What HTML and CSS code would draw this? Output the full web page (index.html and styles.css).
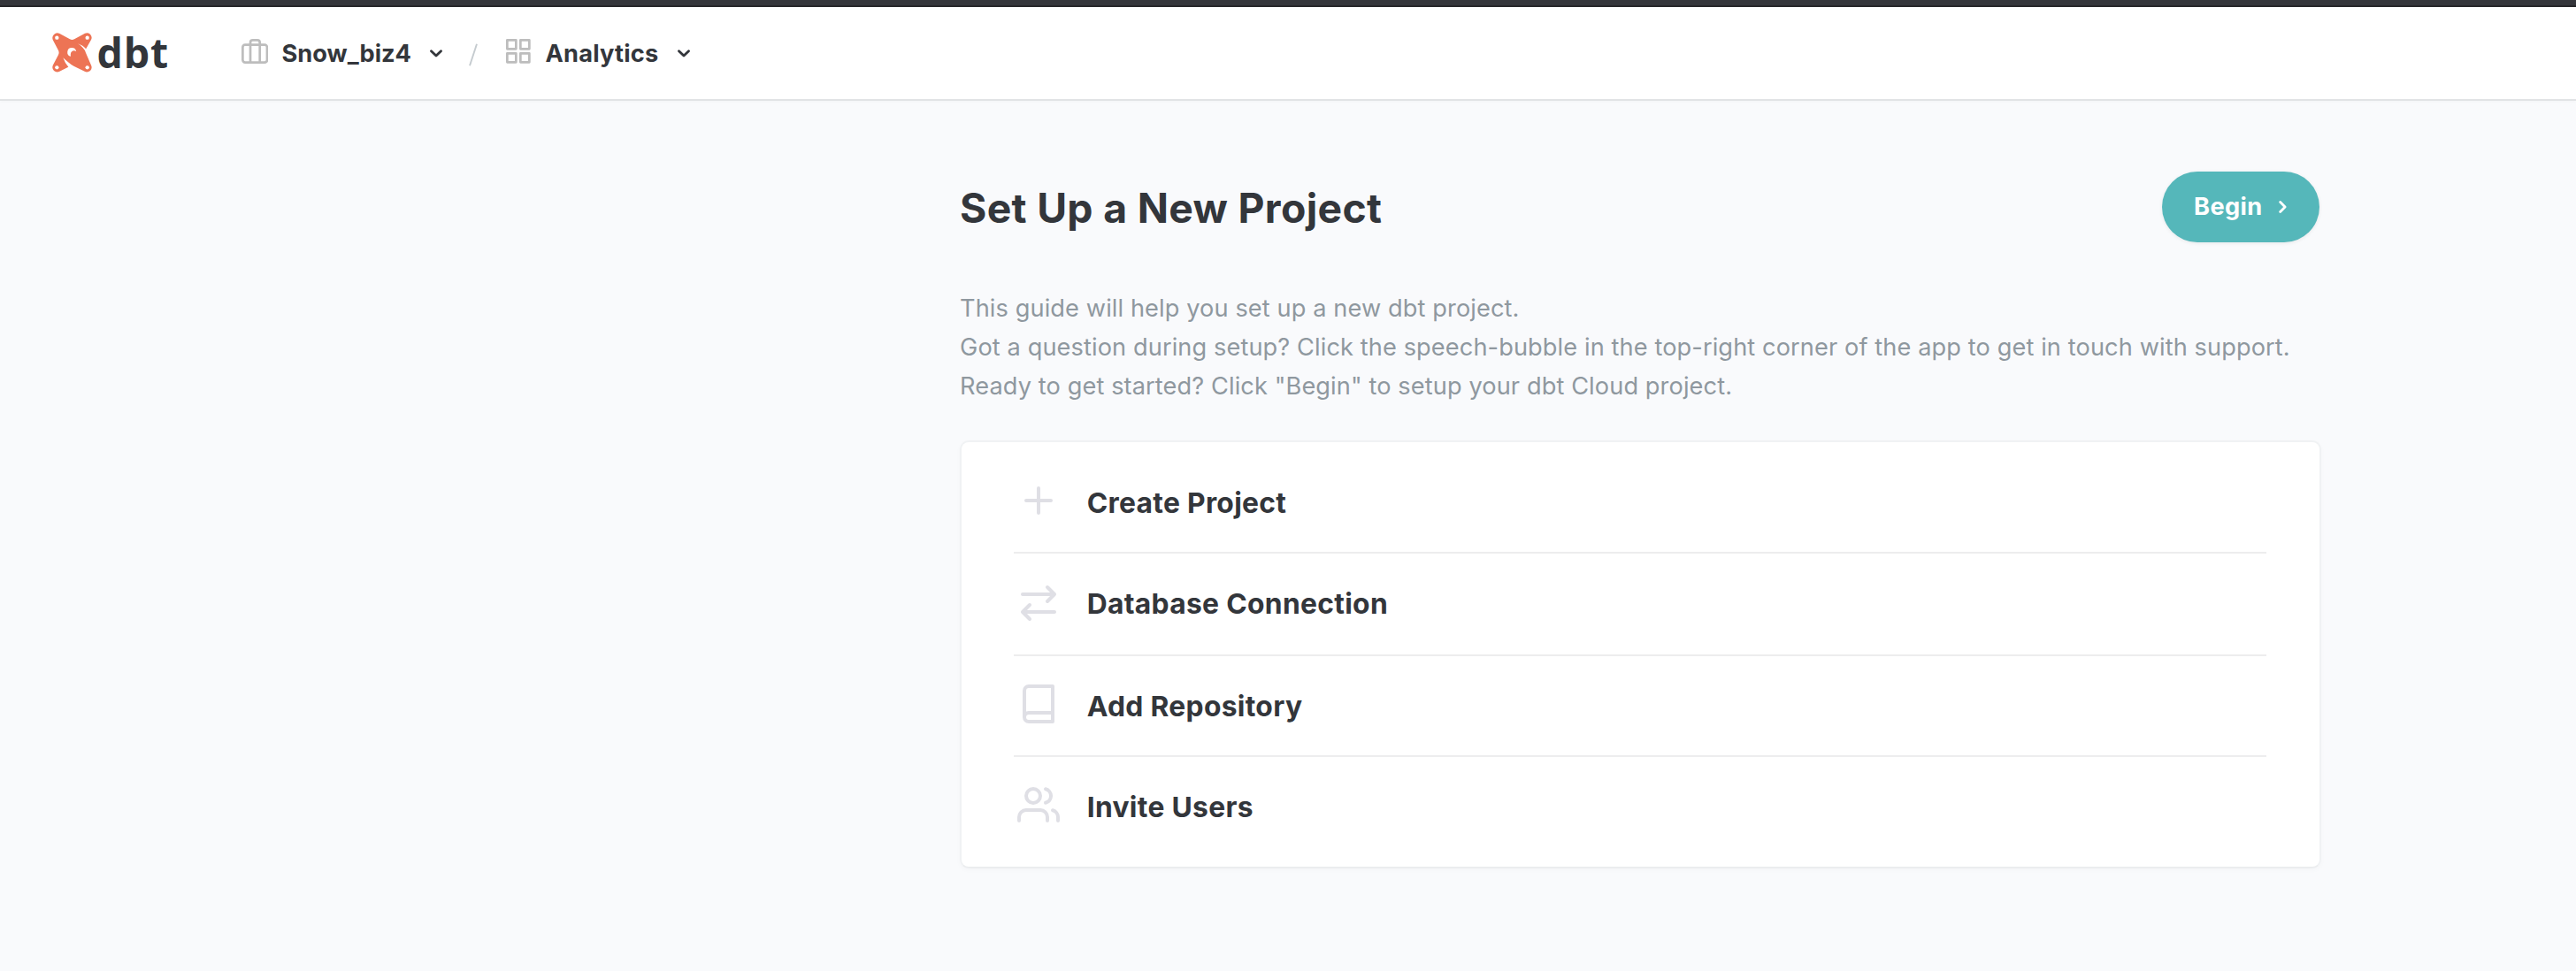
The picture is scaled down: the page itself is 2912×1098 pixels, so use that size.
FILE: index.html
```
<!DOCTYPE html>
<html lang="en">
<head>
<meta charset="utf-8">
<title>Set Up a New Project</title>
<link rel="stylesheet" href="styles.css">
</head>
<body>
<div class="top-strip"></div>
<header class="header">
  <a class="logo">
    <svg class="logo-mark" viewBox="20 20 135 134">
      <path fill="#ed7455" d="M44 22.500L80 42Q87.500 46 95 42L131 22.500Q140 18 149 25Q157 34 152 44L134.500 75Q125 63 107 57Q118 63 124 71Q131 78 134 88L152 130Q157 141 149 149Q140 156 130 151.500L93 133Q84 128 77 122Q65 113 57 105Q63 123 75 136L45 151.500Q34 156 26 149Q18 141 22.500 130L41 95Q44.500 87.500 41 80L22.500 45Q18 34 26 26Q34 18 44 22.500Z"/>
      <g fill="#fff">
        <circle cx="36" cy="37" r="6.500"/><circle cx="139" cy="37" r="6.500"/>
        <circle cx="36" cy="138" r="6.500"/><circle cx="139" cy="138" r="6.500"/>
        <path d="M83 100.500A15 15 0 1 1 101.500 84Q96 79.500 90 81.500Q80 86 83 100.500Z"/>
      </g>
    </svg>
    <span class="logo-text">dbt</span>
  </a>
  <div class="crumb">
    <svg class="icon-case" viewBox="0 0 30.500 28" fill="none" stroke="#bdbdbd" stroke-width="2.700">
      <rect x="1.350" y="6.700" width="27.600" height="19.900" rx="2.800"/>
      <path d="M10 26.500V4.200Q10 1.400 12.800 1.400H17.900Q20.700 1.400 20.700 4.200V26.500"/>
    </svg>
    <span class="crumb-name crumb-account">Snow_biz4</span>
    <svg class="chevron-down" viewBox="0 0 14 9"><path d="M1.500 1.700L7 7L12.500 1.700"/></svg>
  </div>
  <svg class="slash" viewBox="0 0 10 26"><path d="M9 .7L1 25.200"/></svg>
  <div class="crumb">
    <svg class="icon-grid" viewBox="0 0 28 28" fill="none" stroke="#bdbdbd" stroke-width="2.700" stroke-linejoin="round">
      <rect x="1.350" y="1.350" width="10" height="10"/><rect x="16.350" y="1.350" width="10" height="10"/>
      <rect x="1.350" y="16.350" width="10" height="10"/><rect x="16.350" y="16.350" width="10" height="10"/>
    </svg>
    <span class="crumb-name crumb-project">Analytics</span>
    <svg class="chevron-down" viewBox="0 0 14 9"><path d="M1.500 1.700L7 7L12.500 1.700"/></svg>
  </div>
</header>
<main class="content">
  <div class="title-row">
    <h1 class="title">Set Up a New Project</h1>
    <button class="begin">Begin
      <svg class="chevron-right" viewBox="0 0 9 14"><path d="M1.700 1.600L7.100 7L1.700 12.400"/></svg>
    </button>
  </div>
  <p class="intro">This guide will help you set up a new dbt project.<br>Got a question during setup? Click the speech-bubble in the top-right corner of the app to get in touch with support.<br>Ready to get started? Click "Begin" to setup your dbt Cloud project.</p>
  <ul class="steps">
    <li class="step">
      <svg class="step-icon" viewBox="0 0 24 24"><path d="M12 5v14M5 12h14"/></svg>
      <span class="step-name">Create Project</span>
    </li>
    <li class="step">
      <svg class="step-icon step-icon-arrows" viewBox="0 0 24 24"><path d="M17 3l4 4-4 4M3 7h18M7 21l-4-4 4-4M21 17H3"/></svg>
      <span class="step-name step-name-raised">Database Connection</span>
    </li>
    <li class="step">
      <svg class="step-icon" viewBox="0 0 24 24"><path d="M4 19.500A2.500 2.500 0 0 1 6.500 17H20M6.500 2H20v20H6.500A2.500 2.500 0 0 1 4 19.500v-15A2.500 2.500 0 0 1 6.500 2z"/></svg>
      <span class="step-name">Add Repository</span>
    </li>
    <li class="step">
      <svg class="step-icon step-icon-users" viewBox="0 0 24 24"><path d="M17 21v-2a4 4 0 0 0-4-4H5a4 4 0 0 0-4 4v2M23 21v-2a4 4 0 0 0-3-3.870M16 3.130a4 4 0 0 1 0 7.750"/><circle cx="9" cy="7" r="4"/></svg>
      <span class="step-name step-name-raised">Invite Users</span>
    </li>
  </ul>
</main>
</body>
</html>
```
FILE: styles.css
```
* { box-sizing: border-box; }
body {
  margin: 0;
  min-height: 1098px;
  background: #f9fafc;
  color: #33363b;
  font-family: Inter, "Liberation Sans", sans-serif;
}
svg { display: block; flex: none; }
.top-strip { height: 8px; background: #35363b; border-bottom: 2px solid #28282b; }
.header {
  display: flex;
  align-items: center;
  height: 106px;
  padding-left: 58.5px;
  background: #fff;
  border-bottom: 2px solid #e1e3e5;
  box-shadow: 0 1px 4px rgba(0, 0, 0, .03);
}
.logo { display: flex; align-items: center; width: 214px; }
.logo-mark { width: 45px; height: 44.7px; margin-top: -1px; }
.logo-text {
  margin: -3px 0 0 6px;
  font: 700 46.5px/60px "Open Sans", sans-serif;
  letter-spacing: .8px;
}
.crumb { display: flex; align-items: center; }
.icon-case { width: 30.5px; height: 28px; margin-top: -4px; }
.icon-grid { width: 28px; height: 28px; margin-top: -4px; }
.crumb-name { margin-top: 1px; font-size: 27.2px; font-weight: 700; line-height: 40px; }
.crumb-account { width: 167.5px; margin-left: 15.5px; letter-spacing: 0; }
.crumb-project { width: 149px; margin-left: 16.5px; letter-spacing: .22px; }
.chevron-down { width: 14px; height: 9px; }
.chevron-down path, .chevron-right path {
  fill: none;
  stroke: #33363b;
  stroke-width: 2.8;
  stroke-linecap: round;
  stroke-linejoin: round;
}
.slash { width: 10px; height: 26px; margin: 3px 32.5px 0 29.5px; }
.slash path { fill: none; stroke: #c5cbcf; stroke-width: 1.9; }
.content { width: 1539px; margin: 80px 0 0 1085px; }
.title-row { display: flex; align-items: center; justify-content: space-between; height: 80px; }
.title { margin: 2px 0 0; font-size: 46.3px; font-weight: 700; line-height: 60px; letter-spacing: .33px; }
.begin {
  display: flex;
  align-items: center;
  justify-content: space-between;
  width: 178px;
  height: 80px;
  margin-right: 2px;
  padding: 0 37.5px 0 36px;
  border: 0;
  border-radius: 40px;
  background: #55b7ba;
  box-shadow: 0 1px 4px rgba(0, 0, 0, .08);
  color: #fff;
  font: 700 27.2px/40px Inter, sans-serif;
  letter-spacing: .4px;
}
.chevron-right { width: 9px; height: 14px; }
.chevron-right path { stroke: #fff; }
.intro {
  margin: 53px 0 39px;
  color: #8f989f;
  font-size: 27.2px;
  line-height: 44px;
  letter-spacing: .1px;
  white-space: nowrap;
}
.steps {
  margin: 0;
  padding: 12px 60px 10px 59px;
  list-style: none;
  background: #fff;
  border: 2px solid #f0f2f4;
  border-bottom-color: #ebedef;
  border-radius: 10px;
  box-shadow: 0 2px 6px rgba(0, 0, 0, .025);
}
.step {
  display: flex;
  align-items: center;
  height: 114px;
  padding-left: 4px;
  border-bottom: 2px solid #ededee;
}
.step:nth-child(2) { height: 116px; }
.step:last-child { border-bottom: 0; }
.step-icon {
  width: 48px;
  height: 48px;
  margin-top: -4px;
  fill: none;
  stroke: #dfdfe5;
  stroke-width: 2;
  stroke-linecap: round;
  stroke-linejoin: round;
}
.step-icon-arrows { margin-top: -2px; }
.step-icon-users { margin-top: -6px; }
.step-name { margin: 1px 0 0 30.7px; font-size: 31.8px; font-weight: 700; line-height: 44px; letter-spacing: .3px; }
.step-name-raised { margin-top: -1px; }
```
